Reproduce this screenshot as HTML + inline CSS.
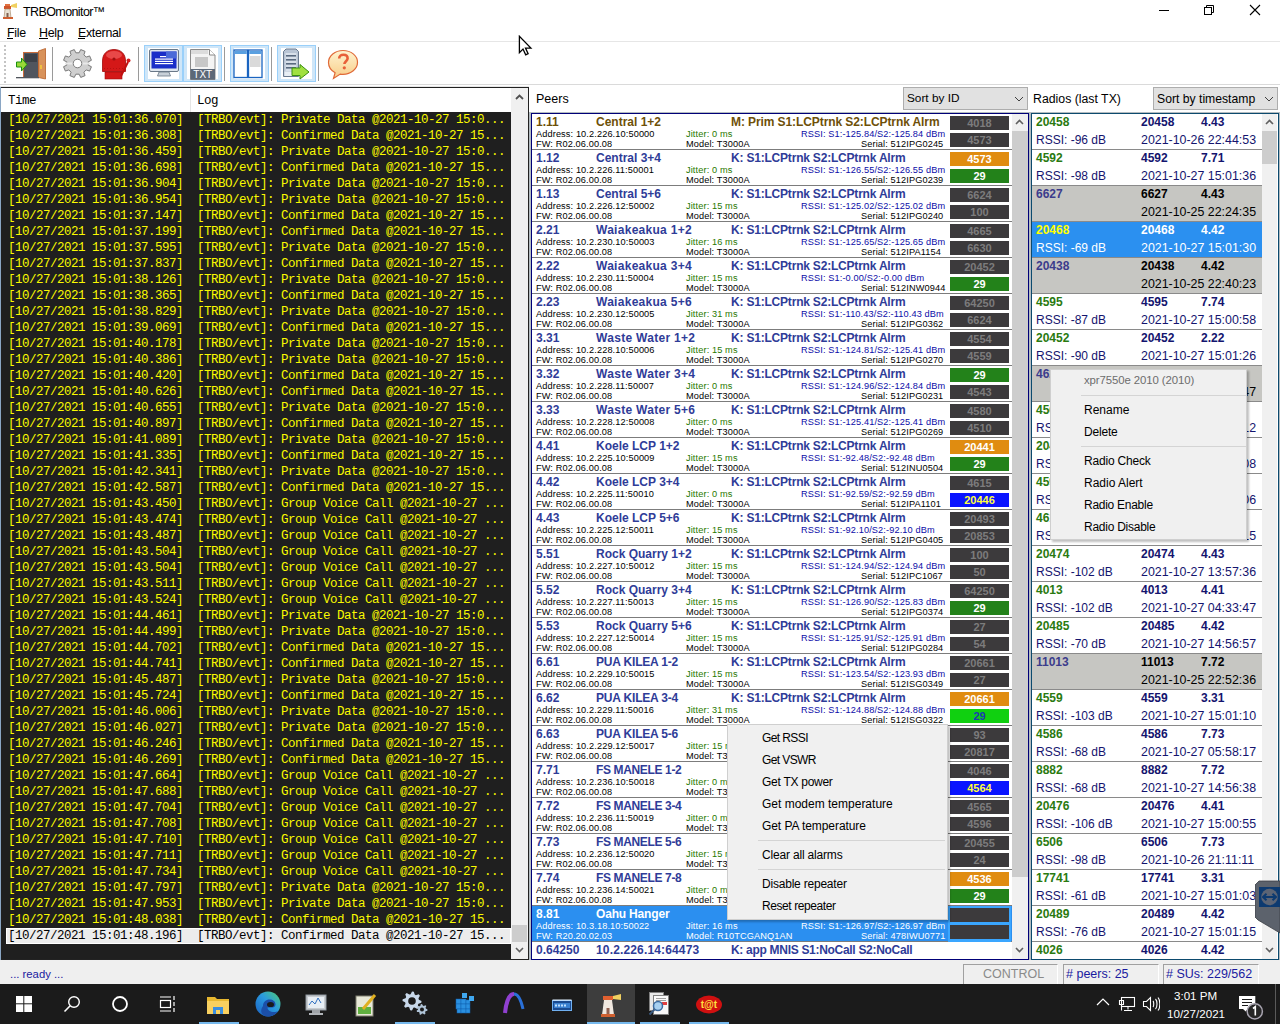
<!DOCTYPE html><html><head><meta charset="utf-8"><style>
*{margin:0;padding:0;box-sizing:border-box}
html,body{width:1280px;height:1024px;overflow:hidden;background:#fff;font-family:"Liberation Sans",sans-serif;position:relative}
.ab{position:absolute;white-space:nowrap}
.t{position:absolute;white-space:nowrap;line-height:1}
.lg{position:absolute;left:0;width:511px;height:16px;font-family:"Liberation Mono",monospace;font-size:12.5px;letter-spacing:-0.5px;color:#fafa00;line-height:16px;white-space:pre}
.lg span{position:absolute;top:0}
.pr{position:absolute;left:0;width:480px;height:36px;border-bottom:1px solid #7c7c7c}
.pr .t{font-weight:bold;font-size:12px}
.pr .s{position:absolute;white-space:nowrap;font-size:9.2px;line-height:1;color:#000;letter-spacing:0.12px}
.bd{position:absolute;left:418px;width:59px;height:14px;font-weight:bold;font-size:11px;line-height:14px;text-align:center;color:#7a7a7a;background:#3a3a3a}
.rr{position:absolute;left:0;width:230px;height:36px;border-bottom:1px solid #8a8a8a}
.rr .t{font-size:12px}
.mi{position:absolute;font-size:12px;line-height:1;white-space:nowrap;color:#000}
</style></head><body>

<div class="ab" style="left:0;top:0;width:1280px;height:42px;background:#fff"></div>
<svg class="ab" style="left:1px;top:2px" width="18" height="18" viewBox="0 0 18 18">
<rect x="3" y="4" width="7" height="3" fill="#d0542a"/><rect x="4" y="2" width="5" height="2" fill="#e07040"/>
<polygon points="10,3 16,1 16,6 10,5" fill="#f0d060"/>
<polygon points="4,7 9,7 10,16 3,16" fill="#e8e0d0" stroke="#a08060" stroke-width="0.6"/>
<rect x="2" y="15" width="10" height="2" fill="#d06030"/><rect x="5.5" y="11" width="2" height="4" fill="#806050"/>
</svg>
<div class="t" style="left:23px;top:5.8px;font-size:12.5px;letter-spacing:-0.6px;color:#000">TRBOmonitor™</div>
<div class="ab" style="left:1159px;top:10px;width:10px;height:1px;background:#000"></div>
<svg class="ab" style="left:1203px;top:4px" width="12" height="12" viewBox="0 0 12 12"><rect x="1.5" y="3.5" width="7" height="7" fill="none" stroke="#000" stroke-width="1"/><path d="M3.5 3.5V1.5H10.5V8.5H8.5" fill="none" stroke="#000" stroke-width="1"/></svg>
<svg class="ab" style="left:1249px;top:4px" width="12" height="12" viewBox="0 0 12 12"><path d="M1 1L11 11M11 1L1 11" stroke="#000" stroke-width="1.1"/></svg>
<div class="t" style="left:7px;top:27.2px;font-size:12.4px;letter-spacing:-0.3px;color:#000">File</div>
<div class="t" style="left:39px;top:27.2px;font-size:12.4px;letter-spacing:-0.3px;color:#000">Help</div>
<div class="t" style="left:78px;top:27.2px;font-size:12.4px;letter-spacing:-0.3px;color:#000">External</div>
<div class="ab" style="left:7px;top:38px;width:6px;height:1px;background:#000"></div>
<div class="ab" style="left:39px;top:38px;width:9px;height:1px;background:#000"></div>
<div class="ab" style="left:78px;top:38px;width:7px;height:1px;background:#000"></div>
<div class="ab" style="left:0;top:41px;width:1280px;height:1px;background:#e6e6e6"></div>
<div class="ab" style="left:0;top:42px;width:1280px;height:43px;background:#fff"></div>
<div class="ab" style="left:0;top:84px;width:1280px;height:1px;background:#dadada"></div>
<div class="ab" style="left:4px;top:45px;width:2px;height:2px;background:#c4c4c4"></div>
<div class="ab" style="left:4px;top:49px;width:2px;height:2px;background:#c4c4c4"></div>
<div class="ab" style="left:4px;top:53px;width:2px;height:2px;background:#c4c4c4"></div>
<div class="ab" style="left:4px;top:57px;width:2px;height:2px;background:#c4c4c4"></div>
<div class="ab" style="left:4px;top:61px;width:2px;height:2px;background:#c4c4c4"></div>
<div class="ab" style="left:4px;top:65px;width:2px;height:2px;background:#c4c4c4"></div>
<div class="ab" style="left:4px;top:69px;width:2px;height:2px;background:#c4c4c4"></div>
<div class="ab" style="left:4px;top:73px;width:2px;height:2px;background:#c4c4c4"></div>
<div class="ab" style="left:4px;top:77px;width:2px;height:2px;background:#c4c4c4"></div>
<div class="ab" style="left:4px;top:81px;width:2px;height:2px;background:#c4c4c4"></div>
<div class="ab" style="left:52px;top:47px;width:1px;height:34px;background:#9a9a9a"></div>
<div class="ab" style="left:138px;top:47px;width:1px;height:34px;background:#9a9a9a"></div>
<div class="ab" style="left:224px;top:47px;width:1px;height:34px;background:#9a9a9a"></div>
<div class="ab" style="left:271px;top:47px;width:1px;height:34px;background:#9a9a9a"></div>
<div class="ab" style="left:318px;top:47px;width:1px;height:34px;background:#9a9a9a"></div>
<div class="ab" style="left:144px;top:45px;width:39px;height:37px;background:#cfe6f8;border:1px solid #9ad0fa"></div>
<div class="ab" style="left:148px;top:48px;width:31px;height:31px;background:#fff"></div>
<div class="ab" style="left:183px;top:45px;width:39px;height:37px;background:#cfe6f8;border:1px solid #9ad0fa"></div>
<div class="ab" style="left:187px;top:48px;width:31px;height:31px;background:#fff"></div>
<div class="ab" style="left:230px;top:45px;width:39px;height:37px;background:#cfe6f8;border:1px solid #9ad0fa"></div>
<div class="ab" style="left:234px;top:48px;width:31px;height:31px;background:#fff"></div>
<div class="ab" style="left:277px;top:45px;width:39px;height:37px;background:#cfe6f8;border:1px solid #9ad0fa"></div>
<div class="ab" style="left:281px;top:48px;width:31px;height:31px;background:#fff"></div>
<svg class="ab" style="left:14px;top:47px" width="34" height="34" viewBox="0 0 34 34">
<rect x="9.5" y="5.5" width="15" height="25" fill="#50555e" stroke="#c86a3a" stroke-width="1"/>
<rect x="11" y="7" width="12" height="8" fill="#3c4048"/>
<polygon points="24.5,4 31.5,1.5 31.5,32 24.5,30.5" fill="#d8925a" stroke="#b8602a" stroke-width="0.8"/>
<rect x="26" y="18" width="2" height="4" fill="#f0c040"/>
<rect x="2" y="30" width="23" height="1.3" fill="#50555c"/>
<polygon points="2.5,15 7.5,15 7.5,11 13,17.5 7.5,24 7.5,20 2.5,20" fill="#98d838" stroke="#1a9010" stroke-width="1"/>
</svg>
<svg class="ab" style="left:62px;top:48px" width="31" height="31" viewBox="0 0 31 31">
<polygon points="26.18,17.11 29.43,18.73 27.63,23.07 24.19,21.92 21.92,24.19 23.07,27.63 18.73,29.43 17.11,26.18 13.89,26.18 12.27,29.43 7.93,27.63 9.08,24.19 6.81,21.92 3.37,23.07 1.57,18.73 4.82,17.11 4.82,13.89 1.57,12.27 3.37,7.93 6.81,9.08 9.08,6.81 7.93,3.37 12.27,1.57 13.89,4.82 17.11,4.82 18.73,1.57 23.07,3.37 21.92,6.81 24.19,9.08 27.63,7.93 29.43,12.27 26.18,13.89" fill="#cfcfcf" stroke="#7a7a7a" stroke-width="1"/>
<path d="M3 15.5h25" stroke="#e8e8e8" stroke-width="2"/>
<circle cx="15.5" cy="15.5" r="4.3" fill="#fff" stroke="#7a7a7a" stroke-width="1"/>
</svg>
<svg class="ab" style="left:100px;top:48px" width="32" height="32" viewBox="0 0 32 32">
<path d="M2.5 23.5V13C2.5 5.5 7.5 1.5 14 1.5S25.5 5.5 25.5 13V23.5z" fill="#d41818" stroke="#a00a0a" stroke-width="0.8"/>
<ellipse cx="14" cy="7" rx="8" ry="4" fill="#e84848"/>
<circle cx="14" cy="11" r="1.6" fill="#a01010"/>
<path d="M4 20.5h20" stroke="#b81010" stroke-width="1" stroke-dasharray="1 2"/>
<rect x="5" y="24" width="17" height="7" fill="#d41818" stroke="#a00a0a" stroke-width="0.6"/>
<path d="M21 28L28 14" stroke="#c01010" stroke-width="2"/><circle cx="28.5" cy="12.5" r="2" fill="#d42020"/>
</svg>
<svg class="ab" style="left:148px;top:48px" width="32" height="32" viewBox="0 0 32 32">
<rect x="1.5" y="1.5" width="29" height="22" rx="1.5" fill="#dfe6ee" stroke="#6a7888" stroke-width="1"/>
<rect x="3.5" y="3.5" width="25" height="17" fill="#1a2ec8"/>
<rect x="18" y="3.5" width="10.5" height="7" fill="#4a6ad8"/>
<g fill="#fff"><rect x="12" y="8" width="6" height="1.2"/><rect x="7" y="10.5" width="18" height="1.2"/><rect x="7" y="12.8" width="18" height="1.2"/><rect x="7" y="15" width="18" height="1.2"/></g>
<path d="M11 24h10l1.5 4h-13z" fill="#c8d0d8" stroke="#6a7888" stroke-width="0.8"/>
</svg>
<svg class="ab" style="left:189px;top:48px" width="28" height="32" viewBox="0 0 28 32">
<path d="M1.5 1.5h19l5.5 5.5v24.5h-24.5z" fill="#f4f4f4" stroke="#8a8a8a" stroke-width="1"/>
<path d="M20.5 1.5v5.5h5.5" fill="#fff" stroke="#8a8a8a" stroke-width="1"/>
<rect x="2" y="2" width="17" height="4" fill="#dcdcdc"/>
<g fill="#9a9a9a"><rect x="6" y="9.5" width="13" height="1"/><rect x="6" y="11.5" width="13" height="1"/><rect x="6" y="13.5" width="13" height="1"/><rect x="6" y="15.5" width="13" height="1"/><rect x="6" y="17.5" width="13" height="1"/></g>
<rect x="1.5" y="21" width="24.5" height="10.5" fill="#5c6878"/>
<text x="13.8" y="30" font-family="Liberation Sans" font-size="10" fill="#fff" text-anchor="middle">TXT</text>
</svg>
<svg class="ab" style="left:233px;top:49px" width="31" height="30" viewBox="0 0 31 30">
<rect x="1" y="1" width="13.5" height="27.5" fill="#fff" stroke="#1a64c0" stroke-width="1.3"/>
<rect x="15.5" y="1" width="13.5" height="27.5" fill="#fff" stroke="#1a64c0" stroke-width="1.3"/>
<rect x="1.8" y="2" width="12" height="3" fill="#5aa0e0"/><rect x="16.3" y="2" width="12" height="3" fill="#5aa0e0"/>
<rect x="17" y="7" width="10.5" height="11" fill="#dadada"/>
</svg>
<svg class="ab" style="left:281px;top:48px" width="30" height="32" viewBox="0 0 30 32">
<path d="M2.5 3.5L5 1h10l2.5 2.5V28.5h-15z" fill="#b8c4d4" stroke="#6a7a90" stroke-width="1"/>
<rect x="4.5" y="5" width="11" height="18" fill="#d8e0ea"/>
<g fill="#5a6a80"><rect x="5" y="7" width="10" height="1.6"/><rect x="5" y="11" width="10" height="1.6"/><rect x="5" y="15" width="10" height="1.6"/><rect x="5" y="19" width="10" height="1.6"/></g>
<rect x="3.5" y="23.5" width="13" height="4.5" fill="#e8eef4"/>
<polygon points="11,20 19,20 19,16.5 28,24 19,31 19,27.5 11,27.5" fill="#a0e040" stroke="#3a9010" stroke-width="1"/>
</svg>
<svg class="ab" style="left:327px;top:49px" width="32" height="31" viewBox="0 0 32 31">
<defs><linearGradient id="hg" x1="0" y1="0" x2="0" y2="1"><stop offset="0" stop-color="#fff4d0"/><stop offset="1" stop-color="#f8cc88"/></linearGradient></defs>
<path d="M16 1.5C8 1.5 1.5 6.8 1.5 13.5c0 4.3 2.6 8 6.6 10.2L6.5 29.5l6.8-4.4c.9.1 1.8.2 2.7.2 8 0 14.5-5.3 14.5-12S24 1.5 16 1.5z" fill="url(#hg)" stroke="#e06a38" stroke-width="1.2"/>
<path d="M12.2 9.5c0-2.2 1.8-3.7 4.2-3.7 2.5 0 4.2 1.5 4.2 3.6 0 2.6-3.2 3-3.2 5.6" fill="none" stroke="#e8603a" stroke-width="2.6"/>
<circle cx="17.3" cy="18.8" r="1.6" fill="#e8603a"/>
</svg>
<svg class="ab" style="left:518px;top:34.6px" width="15" height="21" viewBox="0 0 15 21"><path d="M1.4 1.3V17.6L5 14l2.7 5.8 2.4-1.1-2.6-5.6H12.9Z" fill="#fff" stroke="#000" stroke-width="1.3" stroke-linejoin="miter"/></svg>
<div class="ab" style="left:0;top:86px;width:530px;height:874px;background:#e8e8e8"></div>
<div class="ab" style="left:0;top:87px;width:529px;height:873px;border:1px solid #222;background:#1f1f1f"></div><div class="ab" style="left:0;top:87px;width:1px;height:873px;background:#8aa6c4"></div>
<div class="ab" style="left:1px;top:88px;width:510px;height:24px;background:#fff"></div>
<div class="ab" style="left:190px;top:88px;width:1px;height:24px;background:#e5e5e5"></div>
<div class="t" style="left:8px;top:94.8px;font-family:'Liberation Mono', monospace;font-size:12.5px;letter-spacing:-0.5px;color:#000">Time</div>
<div class="t" style="left:197px;top:94.8px;font-family:'Liberation Mono', monospace;font-size:12.5px;letter-spacing:-0.5px;color:#000">Log</div>
<div class="ab" style="left:1px;top:112px;width:510px;height:847px;overflow:hidden">
<div class="lg" style="top:0px;"><span style="left:7px">[10/27/2021 15:01:36.070]</span><span style="left:196px">[TRBO/evt]: Private Data @2021-10-27 15:0...</span></div>
<div class="lg" style="top:16px;"><span style="left:7px">[10/27/2021 15:01:36.308]</span><span style="left:196px">[TRBO/evt]: Confirmed Data @2021-10-27 15...</span></div>
<div class="lg" style="top:32px;"><span style="left:7px">[10/27/2021 15:01:36.459]</span><span style="left:196px">[TRBO/evt]: Private Data @2021-10-27 15:0...</span></div>
<div class="lg" style="top:48px;"><span style="left:7px">[10/27/2021 15:01:36.698]</span><span style="left:196px">[TRBO/evt]: Confirmed Data @2021-10-27 15...</span></div>
<div class="lg" style="top:64px;"><span style="left:7px">[10/27/2021 15:01:36.904]</span><span style="left:196px">[TRBO/evt]: Private Data @2021-10-27 15:0...</span></div>
<div class="lg" style="top:80px;"><span style="left:7px">[10/27/2021 15:01:36.954]</span><span style="left:196px">[TRBO/evt]: Private Data @2021-10-27 15:0...</span></div>
<div class="lg" style="top:96px;"><span style="left:7px">[10/27/2021 15:01:37.147]</span><span style="left:196px">[TRBO/evt]: Confirmed Data @2021-10-27 15...</span></div>
<div class="lg" style="top:112px;"><span style="left:7px">[10/27/2021 15:01:37.199]</span><span style="left:196px">[TRBO/evt]: Confirmed Data @2021-10-27 15...</span></div>
<div class="lg" style="top:128px;"><span style="left:7px">[10/27/2021 15:01:37.595]</span><span style="left:196px">[TRBO/evt]: Private Data @2021-10-27 15:0...</span></div>
<div class="lg" style="top:144px;"><span style="left:7px">[10/27/2021 15:01:37.837]</span><span style="left:196px">[TRBO/evt]: Confirmed Data @2021-10-27 15...</span></div>
<div class="lg" style="top:160px;"><span style="left:7px">[10/27/2021 15:01:38.126]</span><span style="left:196px">[TRBO/evt]: Private Data @2021-10-27 15:0...</span></div>
<div class="lg" style="top:176px;"><span style="left:7px">[10/27/2021 15:01:38.365]</span><span style="left:196px">[TRBO/evt]: Confirmed Data @2021-10-27 15...</span></div>
<div class="lg" style="top:192px;"><span style="left:7px">[10/27/2021 15:01:38.829]</span><span style="left:196px">[TRBO/evt]: Private Data @2021-10-27 15:0...</span></div>
<div class="lg" style="top:208px;"><span style="left:7px">[10/27/2021 15:01:39.069]</span><span style="left:196px">[TRBO/evt]: Confirmed Data @2021-10-27 15...</span></div>
<div class="lg" style="top:224px;"><span style="left:7px">[10/27/2021 15:01:40.178]</span><span style="left:196px">[TRBO/evt]: Private Data @2021-10-27 15:0...</span></div>
<div class="lg" style="top:240px;"><span style="left:7px">[10/27/2021 15:01:40.386]</span><span style="left:196px">[TRBO/evt]: Private Data @2021-10-27 15:0...</span></div>
<div class="lg" style="top:256px;"><span style="left:7px">[10/27/2021 15:01:40.420]</span><span style="left:196px">[TRBO/evt]: Confirmed Data @2021-10-27 15...</span></div>
<div class="lg" style="top:272px;"><span style="left:7px">[10/27/2021 15:01:40.626]</span><span style="left:196px">[TRBO/evt]: Confirmed Data @2021-10-27 15...</span></div>
<div class="lg" style="top:288px;"><span style="left:7px">[10/27/2021 15:01:40.655]</span><span style="left:196px">[TRBO/evt]: Private Data @2021-10-27 15:0...</span></div>
<div class="lg" style="top:304px;"><span style="left:7px">[10/27/2021 15:01:40.897]</span><span style="left:196px">[TRBO/evt]: Confirmed Data @2021-10-27 15...</span></div>
<div class="lg" style="top:320px;"><span style="left:7px">[10/27/2021 15:01:41.089]</span><span style="left:196px">[TRBO/evt]: Private Data @2021-10-27 15:0...</span></div>
<div class="lg" style="top:336px;"><span style="left:7px">[10/27/2021 15:01:41.335]</span><span style="left:196px">[TRBO/evt]: Confirmed Data @2021-10-27 15...</span></div>
<div class="lg" style="top:352px;"><span style="left:7px">[10/27/2021 15:01:42.341]</span><span style="left:196px">[TRBO/evt]: Private Data @2021-10-27 15:0...</span></div>
<div class="lg" style="top:368px;"><span style="left:7px">[10/27/2021 15:01:42.587]</span><span style="left:196px">[TRBO/evt]: Confirmed Data @2021-10-27 15...</span></div>
<div class="lg" style="top:384px;"><span style="left:7px">[10/27/2021 15:01:43.450]</span><span style="left:196px">[TRBO/evt]: Group Voice Call @2021-10-27 ...</span></div>
<div class="lg" style="top:400px;"><span style="left:7px">[10/27/2021 15:01:43.474]</span><span style="left:196px">[TRBO/evt]: Group Voice Call @2021-10-27 ...</span></div>
<div class="lg" style="top:416px;"><span style="left:7px">[10/27/2021 15:01:43.487]</span><span style="left:196px">[TRBO/evt]: Group Voice Call @2021-10-27 ...</span></div>
<div class="lg" style="top:432px;"><span style="left:7px">[10/27/2021 15:01:43.504]</span><span style="left:196px">[TRBO/evt]: Group Voice Call @2021-10-27 ...</span></div>
<div class="lg" style="top:448px;"><span style="left:7px">[10/27/2021 15:01:43.504]</span><span style="left:196px">[TRBO/evt]: Group Voice Call @2021-10-27 ...</span></div>
<div class="lg" style="top:464px;"><span style="left:7px">[10/27/2021 15:01:43.511]</span><span style="left:196px">[TRBO/evt]: Group Voice Call @2021-10-27 ...</span></div>
<div class="lg" style="top:480px;"><span style="left:7px">[10/27/2021 15:01:43.524]</span><span style="left:196px">[TRBO/evt]: Group Voice Call @2021-10-27 ...</span></div>
<div class="lg" style="top:496px;"><span style="left:7px">[10/27/2021 15:01:44.461]</span><span style="left:196px">[TRBO/evt]: Private Data @2021-10-27 15:0...</span></div>
<div class="lg" style="top:512px;"><span style="left:7px">[10/27/2021 15:01:44.499]</span><span style="left:196px">[TRBO/evt]: Private Data @2021-10-27 15:0...</span></div>
<div class="lg" style="top:528px;"><span style="left:7px">[10/27/2021 15:01:44.702]</span><span style="left:196px">[TRBO/evt]: Confirmed Data @2021-10-27 15...</span></div>
<div class="lg" style="top:544px;"><span style="left:7px">[10/27/2021 15:01:44.741]</span><span style="left:196px">[TRBO/evt]: Confirmed Data @2021-10-27 15...</span></div>
<div class="lg" style="top:560px;"><span style="left:7px">[10/27/2021 15:01:45.487]</span><span style="left:196px">[TRBO/evt]: Private Data @2021-10-27 15:0...</span></div>
<div class="lg" style="top:576px;"><span style="left:7px">[10/27/2021 15:01:45.724]</span><span style="left:196px">[TRBO/evt]: Confirmed Data @2021-10-27 15...</span></div>
<div class="lg" style="top:592px;"><span style="left:7px">[10/27/2021 15:01:46.006]</span><span style="left:196px">[TRBO/evt]: Private Data @2021-10-27 15:0...</span></div>
<div class="lg" style="top:608px;"><span style="left:7px">[10/27/2021 15:01:46.027]</span><span style="left:196px">[TRBO/evt]: Private Data @2021-10-27 15:0...</span></div>
<div class="lg" style="top:624px;"><span style="left:7px">[10/27/2021 15:01:46.246]</span><span style="left:196px">[TRBO/evt]: Confirmed Data @2021-10-27 15...</span></div>
<div class="lg" style="top:640px;"><span style="left:7px">[10/27/2021 15:01:46.269]</span><span style="left:196px">[TRBO/evt]: Confirmed Data @2021-10-27 15...</span></div>
<div class="lg" style="top:656px;"><span style="left:7px">[10/27/2021 15:01:47.664]</span><span style="left:196px">[TRBO/evt]: Group Voice Call @2021-10-27 ...</span></div>
<div class="lg" style="top:672px;"><span style="left:7px">[10/27/2021 15:01:47.688]</span><span style="left:196px">[TRBO/evt]: Group Voice Call @2021-10-27 ...</span></div>
<div class="lg" style="top:688px;"><span style="left:7px">[10/27/2021 15:01:47.704]</span><span style="left:196px">[TRBO/evt]: Group Voice Call @2021-10-27 ...</span></div>
<div class="lg" style="top:704px;"><span style="left:7px">[10/27/2021 15:01:47.708]</span><span style="left:196px">[TRBO/evt]: Group Voice Call @2021-10-27 ...</span></div>
<div class="lg" style="top:720px;"><span style="left:7px">[10/27/2021 15:01:47.710]</span><span style="left:196px">[TRBO/evt]: Group Voice Call @2021-10-27 ...</span></div>
<div class="lg" style="top:736px;"><span style="left:7px">[10/27/2021 15:01:47.711]</span><span style="left:196px">[TRBO/evt]: Group Voice Call @2021-10-27 ...</span></div>
<div class="lg" style="top:752px;"><span style="left:7px">[10/27/2021 15:01:47.734]</span><span style="left:196px">[TRBO/evt]: Group Voice Call @2021-10-27 ...</span></div>
<div class="lg" style="top:768px;"><span style="left:7px">[10/27/2021 15:01:47.797]</span><span style="left:196px">[TRBO/evt]: Private Data @2021-10-27 15:0...</span></div>
<div class="lg" style="top:784px;"><span style="left:7px">[10/27/2021 15:01:47.953]</span><span style="left:196px">[TRBO/evt]: Private Data @2021-10-27 15:0...</span></div>
<div class="lg" style="top:800px;"><span style="left:7px">[10/27/2021 15:01:48.038]</span><span style="left:196px">[TRBO/evt]: Confirmed Data @2021-10-27 15...</span></div>
<div class="ab" style="left:5px;top:816px;width:505px;height:16px;background:#ececec;border:1px solid #fff"></div>
<div class="lg" style="top:816px;color:#000;"><span style="left:7px">[10/27/2021 15:01:48.196]</span><span style="left:196px">[TRBO/evt]: Confirmed Data @2021-10-27 15...</span></div>
</div>
<div class="ab" style="left:511px;top:88px;width:17px;height:871px;background:#f0f0f0"></div>
<div class="ab" style="left:512px;top:925px;width:15px;height:17px;background:#cdcdcd"></div>
<svg class="ab" style="left:515px;top:94px" width="9" height="6" viewBox="0 0 9 6"><path d="M1 5L4.5 1.5 8 5" fill="none" stroke="#505050" stroke-width="1.8"/></svg>
<svg class="ab" style="left:515px;top:947px" width="9" height="6" viewBox="0 0 9 6"><path d="M1 1L4.5 4.5 8 1" fill="none" stroke="#606060" stroke-width="1.6"/></svg>
<div class="ab" style="left:529px;top:86px;width:2px;height:874px;background:#fff"></div><div class="ab" style="left:529px;top:112px;width:2px;height:848px;background:#b4bcc0"></div>
<div class="ab" style="left:531px;top:86px;width:498px;height:27px;background:#fff"></div>
<div class="t" style="left:536px;top:92.8px;font-size:12.5px;color:#000">Peers</div>
<div class="ab" style="left:903px;top:87px;width:125px;height:23px;background:#e1e1e1;border:1px solid #adadad"></div>
<div class="t" style="left:907px;top:92.6px;font-size:11.8px;color:#000">Sort by ID</div>
<svg class="ab" style="left:1014px;top:96px" width="10" height="6" viewBox="0 0 10 6"><path d="M1 1L5 5 9 1" fill="none" stroke="#404040" stroke-width="1"/></svg>
<div class="ab" style="left:531px;top:113px;width:498px;height:847px;border:1px solid #000078;background:#fff"></div>
<div class="ab" style="left:532px;top:114px;width:480px;height:845px;overflow:hidden">
<div class="pr" style="top:0px;">
<div class="t" style="left:4px;top:1.6px;color:#6e5008">1.11</div>
<div class="t" style="left:64px;top:1.6px;color:#6e5008;letter-spacing:0px">Central 1+2</div>
<div class="t" style="left:199px;top:1.6px;color:#6e5008;letter-spacing:-0.09px">M: Prim S1:LCPtrnk S2:LCPtrnk Alrm</div>
<div class="s" style="left:4px;top:15.8px;color:#000">Address: 10.2.226.10:50000</div>
<div class="s" style="left:4px;top:25.8px;color:#000">FW: R02.06.00.08</div>
<div class="s" style="left:154px;top:15.8px;color:#287800">Jitter: 0 ms</div>
<div class="s" style="left:154px;top:25.8px;color:#000">Model: T3000A</div>
<div class="s" style="left:269px;top:15.8px;color:#0c0ca8">RSSI: S1:-125.84/S2:-125.84 dBm</div>
<div class="s" style="left:329px;top:25.8px;color:#000">Serial: 512IPG0245</div>
<div class="bd" style="top:2px;background:#3c3a3c;color:#7c7c7c">4018</div>
<div class="bd" style="top:19px;background:#3c3a3c;color:#7c7c7c">4573</div>
</div>
<div class="pr" style="top:36px;">
<div class="t" style="left:4px;top:1.6px;color:#2f3c98">1.12</div>
<div class="t" style="left:64px;top:1.6px;color:#2f3c98;letter-spacing:0px">Central 3+4</div>
<div class="t" style="left:199px;top:1.6px;color:#2f3c98;letter-spacing:-0.2px">K: S1:LCPtrnk S2:LCPtrnk Alrm</div>
<div class="s" style="left:4px;top:15.8px;color:#000">Address: 10.2.226.11:50001</div>
<div class="s" style="left:4px;top:25.8px;color:#000">FW: R02.06.00.08</div>
<div class="s" style="left:154px;top:15.8px;color:#287800">Jitter: 0 ms</div>
<div class="s" style="left:154px;top:25.8px;color:#000">Model: T3000A</div>
<div class="s" style="left:269px;top:15.8px;color:#0c0ca8">RSSI: S1:-126.55/S2:-126.55 dBm</div>
<div class="s" style="left:329px;top:25.8px;color:#000">Serial: 512IPG0239</div>
<div class="bd" style="top:2px;background:#e08c10;color:#fff">4573</div>
<div class="bd" style="top:19px;background:#23821a;color:#fff">29</div>
</div>
<div class="pr" style="top:72px;">
<div class="t" style="left:4px;top:1.6px;color:#2f3c98">1.13</div>
<div class="t" style="left:64px;top:1.6px;color:#2f3c98;letter-spacing:0px">Central 5+6</div>
<div class="t" style="left:199px;top:1.6px;color:#2f3c98;letter-spacing:-0.2px">K: S1:LCPtrnk S2:LCPtrnk Alrm</div>
<div class="s" style="left:4px;top:15.8px;color:#000">Address: 10.2.226.12:50002</div>
<div class="s" style="left:4px;top:25.8px;color:#000">FW: R02.06.00.08</div>
<div class="s" style="left:154px;top:15.8px;color:#287800">Jitter: 15 ms</div>
<div class="s" style="left:154px;top:25.8px;color:#000">Model: T3000A</div>
<div class="s" style="left:269px;top:15.8px;color:#0c0ca8">RSSI: S1:-125.02/S2:-125.02 dBm</div>
<div class="s" style="left:329px;top:25.8px;color:#000">Serial: 512IPG0240</div>
<div class="bd" style="top:2px;background:#3c3a3c;color:#7c7c7c">6624</div>
<div class="bd" style="top:19px;background:#3c3a3c;color:#7c7c7c">100</div>
</div>
<div class="pr" style="top:108px;">
<div class="t" style="left:4px;top:1.6px;color:#2f3c98">2.21</div>
<div class="t" style="left:64px;top:1.6px;color:#2f3c98;letter-spacing:0.28px">Waiakeakua 1+2</div>
<div class="t" style="left:199px;top:1.6px;color:#2f3c98;letter-spacing:-0.2px">K: S1:LCPtrnk S2:LCPtrnk Alrm</div>
<div class="s" style="left:4px;top:15.8px;color:#000">Address: 10.2.230.10:50003</div>
<div class="s" style="left:4px;top:25.8px;color:#000">FW: R02.06.00.08</div>
<div class="s" style="left:154px;top:15.8px;color:#287800">Jitter: 16 ms</div>
<div class="s" style="left:154px;top:25.8px;color:#000">Model: T3000A</div>
<div class="s" style="left:269px;top:15.8px;color:#0c0ca8">RSSI: S1:-125.65/S2:-125.65 dBm</div>
<div class="s" style="left:329px;top:25.8px;color:#000">Serial: 512IPA1154</div>
<div class="bd" style="top:2px;background:#3c3a3c;color:#7c7c7c">4665</div>
<div class="bd" style="top:19px;background:#3c3a3c;color:#7c7c7c">6630</div>
</div>
<div class="pr" style="top:144px;">
<div class="t" style="left:4px;top:1.6px;color:#2f3c98">2.22</div>
<div class="t" style="left:64px;top:1.6px;color:#2f3c98;letter-spacing:0.28px">Waiakeakua 3+4</div>
<div class="t" style="left:199px;top:1.6px;color:#2f3c98;letter-spacing:-0.2px">K: S1:LCPtrnk S2:LCPtrnk Alrm</div>
<div class="s" style="left:4px;top:15.8px;color:#000">Address: 10.2.230.11:50004</div>
<div class="s" style="left:4px;top:25.8px;color:#000">FW: R02.06.00.08</div>
<div class="s" style="left:154px;top:15.8px;color:#287800">Jitter: 15 ms</div>
<div class="s" style="left:154px;top:25.8px;color:#000">Model: T3000A</div>
<div class="s" style="left:269px;top:15.8px;color:#0c0ca8">RSSI: S1:-0.00/S2:-0.00 dBm</div>
<div class="s" style="left:329px;top:25.8px;color:#000">Serial: 512INW0944</div>
<div class="bd" style="top:2px;background:#3c3a3c;color:#7c7c7c">20452</div>
<div class="bd" style="top:19px;background:#23821a;color:#fff">29</div>
</div>
<div class="pr" style="top:180px;">
<div class="t" style="left:4px;top:1.6px;color:#2f3c98">2.23</div>
<div class="t" style="left:64px;top:1.6px;color:#2f3c98;letter-spacing:0.28px">Waiakeakua 5+6</div>
<div class="t" style="left:199px;top:1.6px;color:#2f3c98;letter-spacing:-0.2px">K: S1:LCPtrnk S2:LCPtrnk Alrm</div>
<div class="s" style="left:4px;top:15.8px;color:#000">Address: 10.2.230.12:50005</div>
<div class="s" style="left:4px;top:25.8px;color:#000">FW: R02.06.00.08</div>
<div class="s" style="left:154px;top:15.8px;color:#287800">Jitter: 31 ms</div>
<div class="s" style="left:154px;top:25.8px;color:#000">Model: T3000A</div>
<div class="s" style="left:269px;top:15.8px;color:#0c0ca8">RSSI: S1:-110.43/S2:-110.43 dBm</div>
<div class="s" style="left:329px;top:25.8px;color:#000">Serial: 512IPG0362</div>
<div class="bd" style="top:2px;background:#3c3a3c;color:#7c7c7c">64250</div>
<div class="bd" style="top:19px;background:#3c3a3c;color:#7c7c7c">6624</div>
</div>
<div class="pr" style="top:216px;">
<div class="t" style="left:4px;top:1.6px;color:#2f3c98">3.31</div>
<div class="t" style="left:64px;top:1.6px;color:#2f3c98;letter-spacing:0.3px">Waste Water 1+2</div>
<div class="t" style="left:199px;top:1.6px;color:#2f3c98;letter-spacing:-0.2px">K: S1:LCPtrnk S2:LCPtrnk Alrm</div>
<div class="s" style="left:4px;top:15.8px;color:#000">Address: 10.2.228.10:50006</div>
<div class="s" style="left:4px;top:25.8px;color:#000">FW: R02.06.00.08</div>
<div class="s" style="left:154px;top:15.8px;color:#287800">Jitter: 15 ms</div>
<div class="s" style="left:154px;top:25.8px;color:#000">Model: T3000A</div>
<div class="s" style="left:269px;top:15.8px;color:#0c0ca8">RSSI: S1:-124.81/S2:-125.41 dBm</div>
<div class="s" style="left:329px;top:25.8px;color:#000">Serial: 512IPG0270</div>
<div class="bd" style="top:2px;background:#3c3a3c;color:#7c7c7c">4554</div>
<div class="bd" style="top:19px;background:#3c3a3c;color:#7c7c7c">4559</div>
</div>
<div class="pr" style="top:252px;">
<div class="t" style="left:4px;top:1.6px;color:#2f3c98">3.32</div>
<div class="t" style="left:64px;top:1.6px;color:#2f3c98;letter-spacing:0.3px">Waste Water 3+4</div>
<div class="t" style="left:199px;top:1.6px;color:#2f3c98;letter-spacing:-0.2px">K: S1:LCPtrnk S2:LCPtrnk Alrm</div>
<div class="s" style="left:4px;top:15.8px;color:#000">Address: 10.2.228.11:50007</div>
<div class="s" style="left:4px;top:25.8px;color:#000">FW: R02.06.00.08</div>
<div class="s" style="left:154px;top:15.8px;color:#287800">Jitter: 0 ms</div>
<div class="s" style="left:154px;top:25.8px;color:#000">Model: T3000A</div>
<div class="s" style="left:269px;top:15.8px;color:#0c0ca8">RSSI: S1:-124.96/S2:-124.84 dBm</div>
<div class="s" style="left:329px;top:25.8px;color:#000">Serial: 512IPG0231</div>
<div class="bd" style="top:2px;background:#23821a;color:#fff">29</div>
<div class="bd" style="top:19px;background:#3c3a3c;color:#7c7c7c">4543</div>
</div>
<div class="pr" style="top:288px;">
<div class="t" style="left:4px;top:1.6px;color:#2f3c98">3.33</div>
<div class="t" style="left:64px;top:1.6px;color:#2f3c98;letter-spacing:0.3px">Waste Water 5+6</div>
<div class="t" style="left:199px;top:1.6px;color:#2f3c98;letter-spacing:-0.2px">K: S1:LCPtrnk S2:LCPtrnk Alrm</div>
<div class="s" style="left:4px;top:15.8px;color:#000">Address: 10.2.228.12:50008</div>
<div class="s" style="left:4px;top:25.8px;color:#000">FW: R02.06.00.08</div>
<div class="s" style="left:154px;top:15.8px;color:#287800">Jitter: 0 ms</div>
<div class="s" style="left:154px;top:25.8px;color:#000">Model: T3000A</div>
<div class="s" style="left:269px;top:15.8px;color:#0c0ca8">RSSI: S1:-125.41/S2:-125.41 dBm</div>
<div class="s" style="left:329px;top:25.8px;color:#000">Serial: 512IPG0269</div>
<div class="bd" style="top:2px;background:#3c3a3c;color:#7c7c7c">4580</div>
<div class="bd" style="top:19px;background:#3c3a3c;color:#7c7c7c">4510</div>
</div>
<div class="pr" style="top:324px;">
<div class="t" style="left:4px;top:1.6px;color:#2f3c98">4.41</div>
<div class="t" style="left:64px;top:1.6px;color:#2f3c98;letter-spacing:0px">Koele LCP 1+2</div>
<div class="t" style="left:199px;top:1.6px;color:#2f3c98;letter-spacing:-0.2px">K: S1:LCPtrnk S2:LCPtrnk Alrm</div>
<div class="s" style="left:4px;top:15.8px;color:#000">Address: 10.2.225.10:50009</div>
<div class="s" style="left:4px;top:25.8px;color:#000">FW: R02.06.00.08</div>
<div class="s" style="left:154px;top:15.8px;color:#287800">Jitter: 15 ms</div>
<div class="s" style="left:154px;top:25.8px;color:#000">Model: T3000A</div>
<div class="s" style="left:269px;top:15.8px;color:#0c0ca8">RSSI: S1:-92.48/S2:-92.48 dBm</div>
<div class="s" style="left:329px;top:25.8px;color:#000">Serial: 512INU0504</div>
<div class="bd" style="top:2px;background:#e08c10;color:#fff">20441</div>
<div class="bd" style="top:19px;background:#23821a;color:#fff">29</div>
</div>
<div class="pr" style="top:360px;">
<div class="t" style="left:4px;top:1.6px;color:#2f3c98">4.42</div>
<div class="t" style="left:64px;top:1.6px;color:#2f3c98;letter-spacing:0px">Koele LCP 3+4</div>
<div class="t" style="left:199px;top:1.6px;color:#2f3c98;letter-spacing:-0.2px">K: S1:LCPtrnk S2:LCPtrnk Alrm</div>
<div class="s" style="left:4px;top:15.8px;color:#000">Address: 10.2.225.11:50010</div>
<div class="s" style="left:4px;top:25.8px;color:#000">FW: R02.06.00.08</div>
<div class="s" style="left:154px;top:15.8px;color:#287800">Jitter: 0 ms</div>
<div class="s" style="left:154px;top:25.8px;color:#000">Model: T3000A</div>
<div class="s" style="left:269px;top:15.8px;color:#0c0ca8">RSSI: S1:-92.59/S2:-92.59 dBm</div>
<div class="s" style="left:329px;top:25.8px;color:#000">Serial: 512IPA1101</div>
<div class="bd" style="top:2px;background:#3c3a3c;color:#7c7c7c">4615</div>
<div class="bd" style="top:19px;background:#0a14ff;color:#ffff40">20446</div>
</div>
<div class="pr" style="top:396px;">
<div class="t" style="left:4px;top:1.6px;color:#2f3c98">4.43</div>
<div class="t" style="left:64px;top:1.6px;color:#2f3c98;letter-spacing:0px">Koele LCP 5+6</div>
<div class="t" style="left:199px;top:1.6px;color:#2f3c98;letter-spacing:-0.2px">K: S1:LCPtrnk S2:LCPtrnk Alrm</div>
<div class="s" style="left:4px;top:15.8px;color:#000">Address: 10.2.225.12:50011</div>
<div class="s" style="left:4px;top:25.8px;color:#000">FW: R02.06.00.08</div>
<div class="s" style="left:154px;top:15.8px;color:#287800">Jitter: 15 ms</div>
<div class="s" style="left:154px;top:25.8px;color:#000">Model: T3000A</div>
<div class="s" style="left:269px;top:15.8px;color:#0c0ca8">RSSI: S1:-92.10/S2:-92.10 dBm</div>
<div class="s" style="left:329px;top:25.8px;color:#000">Serial: 512IPG0405</div>
<div class="bd" style="top:2px;background:#3c3a3c;color:#7c7c7c">20493</div>
<div class="bd" style="top:19px;background:#3c3a3c;color:#7c7c7c">20853</div>
</div>
<div class="pr" style="top:432px;">
<div class="t" style="left:4px;top:1.6px;color:#2f3c98">5.51</div>
<div class="t" style="left:64px;top:1.6px;color:#2f3c98;letter-spacing:0px">Rock Quarry 1+2</div>
<div class="t" style="left:199px;top:1.6px;color:#2f3c98;letter-spacing:-0.2px">K: S1:LCPtrnk S2:LCPtrnk Alrm</div>
<div class="s" style="left:4px;top:15.8px;color:#000">Address: 10.2.227.10:50012</div>
<div class="s" style="left:4px;top:25.8px;color:#000">FW: R02.06.00.08</div>
<div class="s" style="left:154px;top:15.8px;color:#287800">Jitter: 15 ms</div>
<div class="s" style="left:154px;top:25.8px;color:#000">Model: T3000A</div>
<div class="s" style="left:269px;top:15.8px;color:#0c0ca8">RSSI: S1:-124.94/S2:-124.94 dBm</div>
<div class="s" style="left:329px;top:25.8px;color:#000">Serial: 512IPC1067</div>
<div class="bd" style="top:2px;background:#3c3a3c;color:#7c7c7c">100</div>
<div class="bd" style="top:19px;background:#3c3a3c;color:#7c7c7c">50</div>
</div>
<div class="pr" style="top:468px;">
<div class="t" style="left:4px;top:1.6px;color:#2f3c98">5.52</div>
<div class="t" style="left:64px;top:1.6px;color:#2f3c98;letter-spacing:0px">Rock Quarry 3+4</div>
<div class="t" style="left:199px;top:1.6px;color:#2f3c98;letter-spacing:-0.2px">K: S1:LCPtrnk S2:LCPtrnk Alrm</div>
<div class="s" style="left:4px;top:15.8px;color:#000">Address: 10.2.227.11:50013</div>
<div class="s" style="left:4px;top:25.8px;color:#000">FW: R02.06.00.08</div>
<div class="s" style="left:154px;top:15.8px;color:#287800">Jitter: 15 ms</div>
<div class="s" style="left:154px;top:25.8px;color:#000">Model: T3000A</div>
<div class="s" style="left:269px;top:15.8px;color:#0c0ca8">RSSI: S1:-126.90/S2:-125.83 dBm</div>
<div class="s" style="left:329px;top:25.8px;color:#000">Serial: 512IPG0374</div>
<div class="bd" style="top:2px;background:#3c3a3c;color:#7c7c7c">64250</div>
<div class="bd" style="top:19px;background:#23821a;color:#fff">29</div>
</div>
<div class="pr" style="top:504px;">
<div class="t" style="left:4px;top:1.6px;color:#2f3c98">5.53</div>
<div class="t" style="left:64px;top:1.6px;color:#2f3c98;letter-spacing:0px">Rock Quarry 5+6</div>
<div class="t" style="left:199px;top:1.6px;color:#2f3c98;letter-spacing:-0.2px">K: S1:LCPtrnk S2:LCPtrnk Alrm</div>
<div class="s" style="left:4px;top:15.8px;color:#000">Address: 10.2.227.12:50014</div>
<div class="s" style="left:4px;top:25.8px;color:#000">FW: R02.06.00.08</div>
<div class="s" style="left:154px;top:15.8px;color:#287800">Jitter: 15 ms</div>
<div class="s" style="left:154px;top:25.8px;color:#000">Model: T3000A</div>
<div class="s" style="left:269px;top:15.8px;color:#0c0ca8">RSSI: S1:-125.91/S2:-125.91 dBm</div>
<div class="s" style="left:329px;top:25.8px;color:#000">Serial: 512IPG0284</div>
<div class="bd" style="top:2px;background:#3c3a3c;color:#7c7c7c">27</div>
<div class="bd" style="top:19px;background:#3c3a3c;color:#7c7c7c">54</div>
</div>
<div class="pr" style="top:540px;">
<div class="t" style="left:4px;top:1.6px;color:#2f3c98">6.61</div>
<div class="t" style="left:64px;top:1.6px;color:#2f3c98;letter-spacing:-0.18px">PUA KILEA 1-2</div>
<div class="t" style="left:199px;top:1.6px;color:#2f3c98;letter-spacing:-0.2px">K: S1:LCPtrnk S2:LCPtrnk Alrm</div>
<div class="s" style="left:4px;top:15.8px;color:#000">Address: 10.2.229.10:50015</div>
<div class="s" style="left:4px;top:25.8px;color:#000">FW: R02.06.00.08</div>
<div class="s" style="left:154px;top:15.8px;color:#287800">Jitter: 15 ms</div>
<div class="s" style="left:154px;top:25.8px;color:#000">Model: T3000A</div>
<div class="s" style="left:269px;top:15.8px;color:#0c0ca8">RSSI: S1:-123.54/S2:-123.93 dBm</div>
<div class="s" style="left:329px;top:25.8px;color:#000">Serial: 512ISG0349</div>
<div class="bd" style="top:2px;background:#3c3a3c;color:#7c7c7c">20661</div>
<div class="bd" style="top:19px;background:#3c3a3c;color:#7c7c7c">27</div>
</div>
<div class="pr" style="top:576px;">
<div class="t" style="left:4px;top:1.6px;color:#2f3c98">6.62</div>
<div class="t" style="left:64px;top:1.6px;color:#2f3c98;letter-spacing:-0.18px">PUA KILEA 3-4</div>
<div class="t" style="left:199px;top:1.6px;color:#2f3c98;letter-spacing:-0.2px">K: S1:LCPtrnk S2:LCPtrnk Alrm</div>
<div class="s" style="left:4px;top:15.8px;color:#000">Address: 10.2.229.11:50016</div>
<div class="s" style="left:4px;top:25.8px;color:#000">FW: R02.06.00.08</div>
<div class="s" style="left:154px;top:15.8px;color:#287800">Jitter: 31 ms</div>
<div class="s" style="left:154px;top:25.8px;color:#000">Model: T3000A</div>
<div class="s" style="left:269px;top:15.8px;color:#0c0ca8">RSSI: S1:-124.88/S2:-124.88 dBm</div>
<div class="s" style="left:329px;top:25.8px;color:#000">Serial: 512ISG0322</div>
<div class="bd" style="top:2px;background:#e08c10;color:#fff">20661</div>
<div class="bd" style="top:19px;background:#10d010;color:#1a3ab0">29</div>
</div>
<div class="pr" style="top:612px;">
<div class="t" style="left:4px;top:1.6px;color:#2f3c98">6.63</div>
<div class="t" style="left:64px;top:1.6px;color:#2f3c98;letter-spacing:-0.18px">PUA KILEA 5-6</div>
<div class="t" style="left:199px;top:1.6px;color:#2f3c98;letter-spacing:-0.2px">K: S1:LCPtrnk S2:LCPtrnk Alrm</div>
<div class="s" style="left:4px;top:15.8px;color:#000">Address: 10.2.229.12:50017</div>
<div class="s" style="left:4px;top:25.8px;color:#000">FW: R02.06.00.08</div>
<div class="s" style="left:154px;top:15.8px;color:#287800">Jitter: 15 ms</div>
<div class="s" style="left:154px;top:25.8px;color:#000">Model: T3000A</div>
<div class="s" style="left:269px;top:15.8px;color:#0c0ca8">RSSI: S1:-125.00/S2:-125.00 dBm</div>
<div class="s" style="left:329px;top:25.8px;color:#000">Serial: 512ISG0300</div>
<div class="bd" style="top:2px;background:#3c3a3c;color:#7c7c7c">93</div>
<div class="bd" style="top:19px;background:#3c3a3c;color:#7c7c7c">20817</div>
</div>
<div class="pr" style="top:648px;">
<div class="t" style="left:4px;top:1.6px;color:#2f3c98">7.71</div>
<div class="t" style="left:64px;top:1.6px;color:#2f3c98;letter-spacing:-0.36px">FS MANELE 1-2</div>
<div class="t" style="left:199px;top:1.6px;color:#2f3c98;letter-spacing:-0.2px">K: S1:LCPtrnk S2:LCPtrnk Alrm</div>
<div class="s" style="left:4px;top:15.8px;color:#000">Address: 10.2.236.10:50018</div>
<div class="s" style="left:4px;top:25.8px;color:#000">FW: R02.06.00.08</div>
<div class="s" style="left:154px;top:15.8px;color:#287800">Jitter: 0 ms</div>
<div class="s" style="left:154px;top:25.8px;color:#000">Model: T3000A</div>
<div class="s" style="left:269px;top:15.8px;color:#0c0ca8">RSSI: S1:-125.00/S2:-125.00 dBm</div>
<div class="s" style="left:329px;top:25.8px;color:#000">Serial: 512IPG0300</div>
<div class="bd" style="top:2px;background:#3c3a3c;color:#7c7c7c">4046</div>
<div class="bd" style="top:19px;background:#0a14ff;color:#ffff40">4564</div>
</div>
<div class="pr" style="top:684px;">
<div class="t" style="left:4px;top:1.6px;color:#2f3c98">7.72</div>
<div class="t" style="left:64px;top:1.6px;color:#2f3c98;letter-spacing:-0.36px">FS MANELE 3-4</div>
<div class="t" style="left:199px;top:1.6px;color:#2f3c98;letter-spacing:-0.2px">K: S1:LCPtrnk S2:LCPtrnk Alrm</div>
<div class="s" style="left:4px;top:15.8px;color:#000">Address: 10.2.236.11:50019</div>
<div class="s" style="left:4px;top:25.8px;color:#000">FW: R02.06.00.08</div>
<div class="s" style="left:154px;top:15.8px;color:#287800">Jitter: 0 ms</div>
<div class="s" style="left:154px;top:25.8px;color:#000">Model: T3000A</div>
<div class="s" style="left:269px;top:15.8px;color:#0c0ca8">RSSI: S1:-125.00/S2:-125.00 dBm</div>
<div class="s" style="left:329px;top:25.8px;color:#000">Serial: 512IPG0300</div>
<div class="bd" style="top:2px;background:#3c3a3c;color:#7c7c7c">4565</div>
<div class="bd" style="top:19px;background:#3c3a3c;color:#7c7c7c">4596</div>
</div>
<div class="pr" style="top:720px;">
<div class="t" style="left:4px;top:1.6px;color:#2f3c98">7.73</div>
<div class="t" style="left:64px;top:1.6px;color:#2f3c98;letter-spacing:-0.36px">FS MANELE 5-6</div>
<div class="t" style="left:199px;top:1.6px;color:#2f3c98;letter-spacing:-0.2px">K: S1:LCPtrnk S2:LCPtrnk Alrm</div>
<div class="s" style="left:4px;top:15.8px;color:#000">Address: 10.2.236.12:50020</div>
<div class="s" style="left:4px;top:25.8px;color:#000">FW: R02.06.00.08</div>
<div class="s" style="left:154px;top:15.8px;color:#287800">Jitter: 15 ms</div>
<div class="s" style="left:154px;top:25.8px;color:#000">Model: T3000A</div>
<div class="s" style="left:269px;top:15.8px;color:#0c0ca8">RSSI: S1:-125.00/S2:-125.00 dBm</div>
<div class="s" style="left:329px;top:25.8px;color:#000">Serial: 512IPG0300</div>
<div class="bd" style="top:2px;background:#3c3a3c;color:#7c7c7c">20455</div>
<div class="bd" style="top:19px;background:#3c3a3c;color:#7c7c7c">24</div>
</div>
<div class="pr" style="top:756px;">
<div class="t" style="left:4px;top:1.6px;color:#2f3c98">7.74</div>
<div class="t" style="left:64px;top:1.6px;color:#2f3c98;letter-spacing:-0.36px">FS MANELE 7-8</div>
<div class="t" style="left:199px;top:1.6px;color:#2f3c98;letter-spacing:-0.2px">K: S1:LCPtrnk S2:LCPtrnk Alrm</div>
<div class="s" style="left:4px;top:15.8px;color:#000">Address: 10.2.236.14:50021</div>
<div class="s" style="left:4px;top:25.8px;color:#000">FW: R02.06.00.08</div>
<div class="s" style="left:154px;top:15.8px;color:#287800">Jitter: 0 ms</div>
<div class="s" style="left:154px;top:25.8px;color:#000">Model: T3000A</div>
<div class="s" style="left:269px;top:15.8px;color:#0c0ca8">RSSI: S1:-125.00/S2:-125.00 dBm</div>
<div class="s" style="left:329px;top:25.8px;color:#000">Serial: 512IPG0300</div>
<div class="bd" style="top:2px;background:#e08c10;color:#fff">4536</div>
<div class="bd" style="top:19px;background:#23821a;color:#fff">29</div>
</div>
<div class="pr" style="top:792px;background:#2b8ff0;">
<div class="t" style="left:4px;top:1.6px;color:#fff">8.81</div>
<div class="t" style="left:64px;top:1.6px;color:#fff;letter-spacing:-0.18px">Oahu Hanger</div>
<div class="s" style="left:4px;top:15.8px;color:#fff">Address: 10.3.18.10:50022</div>
<div class="s" style="left:4px;top:25.8px;color:#fff">FW: R20.20.02.03</div>
<div class="s" style="left:154px;top:15.8px;color:#fff">Jitter: 16 ms</div>
<div class="s" style="left:154px;top:25.8px;color:#fff">Model: R10TCGANQ1AN</div>
<div class="s" style="left:269px;top:15.8px;color:#fff">RSSI: S1:-126.97/S2:-126.97 dBm</div>
<div class="s" style="left:329px;top:25.8px;color:#fff">Serial: 478IWU0771</div>
<div class="ab" style="left:416px;top:0;width:63px;height:36px;background:#3aa6ff"></div>
<div class="bd" style="top:2px;background:#3c3a3c;color:#7c7c7c"></div>
<div class="bd" style="top:19px;background:#3c3a3c;color:#7c7c7c"></div>
</div>
<div class="pr" style="top:828px;">
<div class="t" style="left:4px;top:1.6px;color:#2f3c98">0.64250</div>
<div class="t" style="left:64px;top:1.6px;color:#2f3c98;letter-spacing:0.15px">10.2.226.14:64473</div>
<div class="t" style="left:199px;top:1.6px;color:#2f3c98;letter-spacing:-0.3px">K: app MNIS S1:NoCall S2:NoCall</div>
</div>
</div>
<div class="ab" style="left:1012px;top:114px;width:16px;height:845px;background:#f0f0f0"></div>
<div class="ab" style="left:1012px;top:131px;width:16px;height:746px;background:#cdcdcd"></div>
<svg class="ab" style="left:1015px;top:119px" width="9" height="6" viewBox="0 0 9 6"><path d="M1 5L4.5 1.5 8 5" fill="none" stroke="#606060" stroke-width="1.6"/></svg>
<svg class="ab" style="left:1015px;top:947px" width="9" height="6" viewBox="0 0 9 6"><path d="M1 1L4.5 4.5 8 1" fill="none" stroke="#606060" stroke-width="1.6"/></svg>
<div class="ab" style="left:1029px;top:112px;width:2px;height:848px;background:#b4bcc0"></div>
<div class="ab" style="left:1031px;top:86px;width:249px;height:27px;background:#fff"></div>
<div class="t" style="left:1033px;top:92.6px;font-size:12.3px;color:#000">Radios (last TX)</div>
<div class="ab" style="left:1153px;top:87px;width:125px;height:23px;background:#e1e1e1;border:1px solid #adadad"></div>
<div class="t" style="left:1157px;top:92.6px;font-size:12.2px;color:#000">Sort by timestamp</div>
<svg class="ab" style="left:1264px;top:96px" width="10" height="6" viewBox="0 0 10 6"><path d="M1 1L5 5 9 1" fill="none" stroke="#404040" stroke-width="1"/></svg>
<div class="ab" style="left:1031px;top:113px;width:248px;height:847px;border:1px solid #0c4a6e;background:#fff"></div><div class="ab" style="left:1279px;top:112px;width:1px;height:848px;background:#b4bcc0"></div>
<div class="ab" style="left:1032px;top:114px;width:230px;height:844px;overflow:hidden">
<div class="rr" style="top:0px;">
<div class="t" style="left:4px;top:2px;font-weight:bold;color:#2a7a10">20458</div>
<div class="t" style="left:109px;top:2px;font-weight:bold;color:#14146e">20458</div>
<div class="t" style="left:169px;top:2px;font-weight:bold;color:#14146e">4.43</div>
<div class="t" style="left:4px;top:20.4px;color:#14146e">RSSI: -96 dB</div>
<div class="t" style="left:109px;top:20.2px;font-size:12.4px;color:#14146e">2021-10-26 22:44:53</div>
</div>
<div class="rr" style="top:36px;">
<div class="t" style="left:4px;top:2px;font-weight:bold;color:#2a7a10">4592</div>
<div class="t" style="left:109px;top:2px;font-weight:bold;color:#14146e">4592</div>
<div class="t" style="left:169px;top:2px;font-weight:bold;color:#14146e">7.71</div>
<div class="t" style="left:4px;top:20.4px;color:#14146e">RSSI: -98 dB</div>
<div class="t" style="left:109px;top:20.2px;font-size:12.4px;color:#14146e">2021-10-27 15:01:36</div>
</div>
<div class="rr" style="top:72px;background:#c6c6c2;">
<div class="t" style="left:4px;top:2px;font-weight:bold;color:#3c3c8c">6627</div>
<div class="t" style="left:109px;top:2px;font-weight:bold;color:#000">6627</div>
<div class="t" style="left:169px;top:2px;font-weight:bold;color:#000">4.43</div>
<div class="t" style="left:109px;top:20.2px;font-size:12.4px;color:#000">2021-10-25 22:24:35</div>
</div>
<div class="rr" style="top:108px;background:#2b90f0;">
<div class="t" style="left:4px;top:2px;font-weight:bold;color:#ffff00">20468</div>
<div class="t" style="left:109px;top:2px;font-weight:bold;color:#fff">20468</div>
<div class="t" style="left:169px;top:2px;font-weight:bold;color:#fff">4.42</div>
<div class="t" style="left:4px;top:20.4px;color:#fff">RSSI: -69 dB</div>
<div class="t" style="left:109px;top:20.2px;font-size:12.4px;color:#fff">2021-10-27 15:01:30</div>
</div>
<div class="rr" style="top:144px;background:#c6c6c2;">
<div class="t" style="left:4px;top:2px;font-weight:bold;color:#3c3c8c">20438</div>
<div class="t" style="left:109px;top:2px;font-weight:bold;color:#000">20438</div>
<div class="t" style="left:169px;top:2px;font-weight:bold;color:#000">4.42</div>
<div class="t" style="left:109px;top:20.2px;font-size:12.4px;color:#000">2021-10-25 22:40:23</div>
</div>
<div class="rr" style="top:180px;">
<div class="t" style="left:4px;top:2px;font-weight:bold;color:#2a7a10">4595</div>
<div class="t" style="left:109px;top:2px;font-weight:bold;color:#14146e">4595</div>
<div class="t" style="left:169px;top:2px;font-weight:bold;color:#14146e">7.74</div>
<div class="t" style="left:4px;top:20.4px;color:#14146e">RSSI: -87 dB</div>
<div class="t" style="left:109px;top:20.2px;font-size:12.4px;color:#14146e">2021-10-27 15:00:58</div>
</div>
<div class="rr" style="top:216px;">
<div class="t" style="left:4px;top:2px;font-weight:bold;color:#2a7a10">20452</div>
<div class="t" style="left:109px;top:2px;font-weight:bold;color:#14146e">20452</div>
<div class="t" style="left:169px;top:2px;font-weight:bold;color:#14146e">2.22</div>
<div class="t" style="left:4px;top:20.4px;color:#14146e">RSSI: -90 dB</div>
<div class="t" style="left:109px;top:20.2px;font-size:12.4px;color:#14146e">2021-10-27 15:01:26</div>
</div>
<div class="rr" style="top:252px;background:#c6c6c2;">
<div class="t" style="left:4px;top:2px;font-weight:bold;color:#3c3c8c">4627</div>
<div class="t" style="left:109px;top:2px;font-weight:bold;color:#000">4627</div>
<div class="t" style="left:169px;top:2px;font-weight:bold;color:#000">4.42</div>
<div class="t" style="left:109px;top:20.2px;font-size:12.4px;color:#000">2021-10-25 22:30:47</div>
</div>
<div class="rr" style="top:288px;">
<div class="t" style="left:4px;top:2px;font-weight:bold;color:#2a7a10">4561</div>
<div class="t" style="left:109px;top:2px;font-weight:bold;color:#14146e">4561</div>
<div class="t" style="left:169px;top:2px;font-weight:bold;color:#14146e">4.42</div>
<div class="t" style="left:4px;top:20.4px;color:#14146e">RSSI: -80 dB</div>
<div class="t" style="left:109px;top:20.2px;font-size:12.4px;color:#14146e">2021-10-27 15:01:12</div>
</div>
<div class="rr" style="top:324px;">
<div class="t" style="left:4px;top:2px;font-weight:bold;color:#2a7a10">20471</div>
<div class="t" style="left:109px;top:2px;font-weight:bold;color:#14146e">20471</div>
<div class="t" style="left:169px;top:2px;font-weight:bold;color:#14146e">4.43</div>
<div class="t" style="left:4px;top:20.4px;color:#14146e">RSSI: -95 dB</div>
<div class="t" style="left:109px;top:20.2px;font-size:12.4px;color:#14146e">2021-10-27 15:00:08</div>
</div>
<div class="rr" style="top:360px;">
<div class="t" style="left:4px;top:2px;font-weight:bold;color:#2a7a10">4590</div>
<div class="t" style="left:109px;top:2px;font-weight:bold;color:#14146e">4590</div>
<div class="t" style="left:169px;top:2px;font-weight:bold;color:#14146e">7.72</div>
<div class="t" style="left:4px;top:20.4px;color:#14146e">RSSI: -99 dB</div>
<div class="t" style="left:109px;top:20.2px;font-size:12.4px;color:#14146e">2021-10-27 15:00:06</div>
</div>
<div class="rr" style="top:396px;">
<div class="t" style="left:4px;top:2px;font-weight:bold;color:#2a7a10">4611</div>
<div class="t" style="left:109px;top:2px;font-weight:bold;color:#14146e">4611</div>
<div class="t" style="left:169px;top:2px;font-weight:bold;color:#14146e">4.42</div>
<div class="t" style="left:4px;top:20.4px;color:#14146e">RSSI: -90 dB</div>
<div class="t" style="left:109px;top:20.2px;font-size:12.4px;color:#14146e">2021-10-27 15:01:15</div>
</div>
<div class="rr" style="top:432px;">
<div class="t" style="left:4px;top:2px;font-weight:bold;color:#2a7a10">20474</div>
<div class="t" style="left:109px;top:2px;font-weight:bold;color:#14146e">20474</div>
<div class="t" style="left:169px;top:2px;font-weight:bold;color:#14146e">4.43</div>
<div class="t" style="left:4px;top:20.4px;color:#14146e">RSSI: -102 dB</div>
<div class="t" style="left:109px;top:20.2px;font-size:12.4px;color:#14146e">2021-10-27 13:57:36</div>
</div>
<div class="rr" style="top:468px;">
<div class="t" style="left:4px;top:2px;font-weight:bold;color:#2a7a10">4013</div>
<div class="t" style="left:109px;top:2px;font-weight:bold;color:#14146e">4013</div>
<div class="t" style="left:169px;top:2px;font-weight:bold;color:#14146e">4.41</div>
<div class="t" style="left:4px;top:20.4px;color:#14146e">RSSI: -102 dB</div>
<div class="t" style="left:109px;top:20.2px;font-size:12.4px;color:#14146e">2021-10-27 04:33:47</div>
</div>
<div class="rr" style="top:504px;">
<div class="t" style="left:4px;top:2px;font-weight:bold;color:#2a7a10">20485</div>
<div class="t" style="left:109px;top:2px;font-weight:bold;color:#14146e">20485</div>
<div class="t" style="left:169px;top:2px;font-weight:bold;color:#14146e">4.42</div>
<div class="t" style="left:4px;top:20.4px;color:#14146e">RSSI: -70 dB</div>
<div class="t" style="left:109px;top:20.2px;font-size:12.4px;color:#14146e">2021-10-27 14:56:57</div>
</div>
<div class="rr" style="top:540px;background:#c6c6c2;">
<div class="t" style="left:4px;top:2px;font-weight:bold;color:#3c3c8c">11013</div>
<div class="t" style="left:109px;top:2px;font-weight:bold;color:#000">11013</div>
<div class="t" style="left:169px;top:2px;font-weight:bold;color:#000">7.72</div>
<div class="t" style="left:109px;top:20.2px;font-size:12.4px;color:#000">2021-10-25 22:52:36</div>
</div>
<div class="rr" style="top:576px;">
<div class="t" style="left:4px;top:2px;font-weight:bold;color:#2a7a10">4559</div>
<div class="t" style="left:109px;top:2px;font-weight:bold;color:#14146e">4559</div>
<div class="t" style="left:169px;top:2px;font-weight:bold;color:#14146e">3.31</div>
<div class="t" style="left:4px;top:20.4px;color:#14146e">RSSI: -103 dB</div>
<div class="t" style="left:109px;top:20.2px;font-size:12.4px;color:#14146e">2021-10-27 15:01:10</div>
</div>
<div class="rr" style="top:612px;">
<div class="t" style="left:4px;top:2px;font-weight:bold;color:#2a7a10">4586</div>
<div class="t" style="left:109px;top:2px;font-weight:bold;color:#14146e">4586</div>
<div class="t" style="left:169px;top:2px;font-weight:bold;color:#14146e">7.73</div>
<div class="t" style="left:4px;top:20.4px;color:#14146e">RSSI: -68 dB</div>
<div class="t" style="left:109px;top:20.2px;font-size:12.4px;color:#14146e">2021-10-27 05:58:17</div>
</div>
<div class="rr" style="top:648px;">
<div class="t" style="left:4px;top:2px;font-weight:bold;color:#2a7a10">8882</div>
<div class="t" style="left:109px;top:2px;font-weight:bold;color:#14146e">8882</div>
<div class="t" style="left:169px;top:2px;font-weight:bold;color:#14146e">7.72</div>
<div class="t" style="left:4px;top:20.4px;color:#14146e">RSSI: -68 dB</div>
<div class="t" style="left:109px;top:20.2px;font-size:12.4px;color:#14146e">2021-10-27 14:56:38</div>
</div>
<div class="rr" style="top:684px;">
<div class="t" style="left:4px;top:2px;font-weight:bold;color:#2a7a10">20476</div>
<div class="t" style="left:109px;top:2px;font-weight:bold;color:#14146e">20476</div>
<div class="t" style="left:169px;top:2px;font-weight:bold;color:#14146e">4.41</div>
<div class="t" style="left:4px;top:20.4px;color:#14146e">RSSI: -106 dB</div>
<div class="t" style="left:109px;top:20.2px;font-size:12.4px;color:#14146e">2021-10-27 15:00:55</div>
</div>
<div class="rr" style="top:720px;">
<div class="t" style="left:4px;top:2px;font-weight:bold;color:#2a7a10">6506</div>
<div class="t" style="left:109px;top:2px;font-weight:bold;color:#14146e">6506</div>
<div class="t" style="left:169px;top:2px;font-weight:bold;color:#14146e">7.73</div>
<div class="t" style="left:4px;top:20.4px;color:#14146e">RSSI: -98 dB</div>
<div class="t" style="left:109px;top:20.2px;font-size:12.4px;color:#14146e">2021-10-26 21:11:11</div>
</div>
<div class="rr" style="top:756px;">
<div class="t" style="left:4px;top:2px;font-weight:bold;color:#2a7a10">17741</div>
<div class="t" style="left:109px;top:2px;font-weight:bold;color:#14146e">17741</div>
<div class="t" style="left:169px;top:2px;font-weight:bold;color:#14146e">3.31</div>
<div class="t" style="left:4px;top:20.4px;color:#14146e">RSSI: -61 dB</div>
<div class="t" style="left:109px;top:20.2px;font-size:12.4px;color:#14146e">2021-10-27 15:01:03</div>
</div>
<div class="rr" style="top:792px;">
<div class="t" style="left:4px;top:2px;font-weight:bold;color:#2a7a10">20489</div>
<div class="t" style="left:109px;top:2px;font-weight:bold;color:#14146e">20489</div>
<div class="t" style="left:169px;top:2px;font-weight:bold;color:#14146e">4.42</div>
<div class="t" style="left:4px;top:20.4px;color:#14146e">RSSI: -76 dB</div>
<div class="t" style="left:109px;top:20.2px;font-size:12.4px;color:#14146e">2021-10-27 15:01:15</div>
</div>
<div class="rr" style="top:828px;">
<div class="t" style="left:4px;top:2px;font-weight:bold;color:#2a7a10">4026</div>
<div class="t" style="left:109px;top:2px;font-weight:bold;color:#14146e">4026</div>
<div class="t" style="left:169px;top:2px;font-weight:bold;color:#14146e">4.42</div>
<div class="t" style="left:4px;top:20.4px;color:#14146e">RSSI: -80 dB</div>
<div class="t" style="left:109px;top:20.2px;font-size:12.4px;color:#14146e">2021-10-27 15:01:20</div>
</div>
</div>
<div class="ab" style="left:1262px;top:114px;width:15px;height:845px;background:#f0f0f0"></div>
<div class="ab" style="left:1262px;top:131px;width:15px;height:33px;background:#cdcdcd"></div>
<svg class="ab" style="left:1265px;top:119px" width="9" height="6" viewBox="0 0 9 6"><path d="M1 5L4.5 1.5 8 5" fill="none" stroke="#606060" stroke-width="1.6"/></svg>
<svg class="ab" style="left:1265px;top:947px" width="9" height="6" viewBox="0 0 9 6"><path d="M1 1L4.5 4.5 8 1" fill="none" stroke="#606060" stroke-width="1.6"/></svg>
<div class="ab" style="left:529px;top:112px;width:751px;height:1px;background:#b4bcc0"></div>
<div class="ab" style="left:727px;top:724px;width:221px;height:196px;background:#f0f0f0;border:1px solid #cfcfcf;box-shadow:2px 2px 2px rgba(0,0,0,.25)"></div>
<div class="mi" style="left:762px;top:731.5px;color:#000;letter-spacing:-0.6px;">Get RSSI</div>
<div class="mi" style="left:762px;top:753.5px;color:#000;letter-spacing:-0.6px;">Get VSWR</div>
<div class="mi" style="left:762px;top:775.5px;color:#000;letter-spacing:-0.27px;">Get TX power</div>
<div class="mi" style="left:762px;top:797.5px;color:#000;letter-spacing:0px;">Get modem temperature</div>
<div class="mi" style="left:762px;top:819.5px;color:#000;letter-spacing:-0.07px;">Get PA temperature</div>
<div class="ab" style="left:758px;top:840px;width:187px;height:1px;background:#d4d4d4"></div>
<div class="mi" style="left:762px;top:848.5px;color:#000;letter-spacing:-0.18px;">Clear all alarms</div>
<div class="ab" style="left:758px;top:869px;width:187px;height:1px;background:#d4d4d4"></div>
<div class="mi" style="left:762px;top:877.5px;color:#000;letter-spacing:-0.21px;">Disable repeater</div>
<div class="mi" style="left:762px;top:899.5px;color:#000;letter-spacing:-0.42px;">Reset repeater</div>
<div class="ab" style="left:1050px;top:369px;width:197px;height:171px;background:#f0f0f0;border:1px solid #cfcfcf;box-shadow:2px 2px 2px rgba(0,0,0,.25)"></div>
<div class="mi" style="left:1084px;top:375px;color:#6d6d6d;letter-spacing:-0.1px;font-size:11.4px">xpr7550e 2010 (2010)</div>
<div class="ab" style="left:1081px;top:395px;width:165px;height:1px;background:#d4d4d4"></div>
<div class="mi" style="left:1084px;top:404px;color:#000;letter-spacing:0px;">Rename</div>
<div class="mi" style="left:1084px;top:426px;color:#000;letter-spacing:-0.2px;">Delete</div>
<div class="ab" style="left:1081px;top:446px;width:165px;height:1px;background:#d4d4d4"></div>
<div class="mi" style="left:1084px;top:455px;color:#000;letter-spacing:-0.2px;">Radio Check</div>
<div class="mi" style="left:1084px;top:477px;color:#000;letter-spacing:0px;">Radio Alert</div>
<div class="mi" style="left:1084px;top:499px;color:#000;letter-spacing:-0.27px;">Radio Enable</div>
<div class="mi" style="left:1084px;top:521px;color:#000;letter-spacing:-0.25px;">Radio Disable</div>
<svg class="ab" style="left:1255px;top:880px" width="25" height="54" viewBox="0 0 25 54"><path d="M0 5L4 1H25V53L3 40L0 37Z" fill="#5c626c" stroke="#3a3e44" stroke-width="0.8"/><rect x="4" y="7" width="21" height="20" fill="#0d3a70"/><circle cx="14.5" cy="17" r="8.3" fill="#5c6474"/><path d="M8.5 17h12M11.5 13.8L8 17l3.5 3.2M17.5 13.8L21 17l-3.5 3.2" stroke="#0d3a70" stroke-width="2" fill="none"/></svg>
<div class="ab" style="left:0;top:960px;width:1280px;height:24px;background:#efefef"></div>
<div class="t" style="left:10px;top:969px;font-size:11.3px;color:#1a1aa0">... ready ...</div>
<div class="ab" style="left:963px;top:964px;width:95px;height:20px;border-top:1px solid #a0a0a0;border-left:1px solid #a0a0a0;border-right:1px solid #fff;background:#efefef"></div>
<div class="t" style="left:983px;top:968px;font-size:12.5px;color:#8a8a8a">CONTROL</div>
<div class="ab" style="left:1063px;top:964px;width:96px;height:20px;border-top:1px solid #a0a0a0;border-left:1px solid #a0a0a0;border-right:1px solid #fff;background:#efefef"></div>
<div class="t" style="left:1066px;top:968px;font-size:12.5px;color:#1a1aa0"># peers: 25</div>
<div class="ab" style="left:1163px;top:964px;width:96px;height:20px;border-top:1px solid #a0a0a0;border-left:1px solid #a0a0a0;border-right:1px solid #fff;background:#efefef"></div>
<div class="t" style="left:1166px;top:968px;font-size:12.5px;color:#1a1aa0"># SUs: 229/562</div>
<div class="ab" style="left:0;top:984px;width:1280px;height:40px;background:#1b1b1b"></div>
<svg class="ab" style="left:16px;top:996px" width="16" height="16" viewBox="0 0 16 16"><g fill="#fff"><rect x="0" y="0" width="7.3" height="7.3"/><rect x="8.3" y="0" width="7.7" height="7.3"/><rect x="0" y="8.3" width="7.3" height="7.7"/><rect x="8.3" y="8.3" width="7.7" height="7.7"/></g></svg>
<svg class="ab" style="left:63px;top:995px" width="18" height="18" viewBox="0 0 18 18"><circle cx="11" cy="7" r="5.3" fill="none" stroke="#fff" stroke-width="1.4"/><path d="M7.2 10.8L1.5 16.5" stroke="#fff" stroke-width="1.6"/></svg>
<svg class="ab" style="left:111px;top:995px" width="18" height="18" viewBox="0 0 18 18"><circle cx="9" cy="9" r="7" fill="none" stroke="#fff" stroke-width="1.8"/></svg>
<svg class="ab" style="left:159px;top:995px" width="18" height="18" viewBox="0 0 18 18"><g fill="none" stroke="#fff" stroke-width="1.2"><path d="M1 2h11M1 16h11"/><rect x="1.5" y="5.5" width="10" height="7"/><path d="M15 1v4M15 7v4M15 13v4"/></g></svg>
<svg class="ab" style="left:207px;top:995px" width="22" height="19" viewBox="0 0 22 19"><path d="M0 2h8l2 2h12v15H0z" fill="#e8b830"/><rect x="0" y="6" width="22" height="13" fill="#f8d060"/><path d="M6 12h10v7h-3v-4h-4v4H6z" fill="#3a8ee0"/></svg>
<div class="ab" style="left:199px;top:1022px;width:40px;height:2px;background:#76b9ed"></div>
<svg class="ab" style="left:255px;top:991px" width="26" height="26" viewBox="0 0 26 26"><defs><linearGradient id="eg" x1="0" y1="1" x2="1" y2="0"><stop offset="0" stop-color="#1a5fc0"/><stop offset="0.55" stop-color="#2a9ae0"/><stop offset="1" stop-color="#50d070"/></linearGradient></defs><circle cx="13" cy="13" r="12.5" fill="url(#eg)"/><path d="M8 15c0-4 3-6.5 6.5-6.5 3.5 0 6 2 6 5 0 2-1.5 3-3 3h-5c0 2.5 2.5 4.5 6.5 4.5 1.5 0 3-.4 4-1-2 3.2-5.5 5.5-10 5.5-6 0-9-5-5-10.5z" fill="#1b4fa8"/><ellipse cx="15.5" cy="13.5" rx="3.5" ry="2.6" fill="#1b1b1b"/></svg>
<svg class="ab" style="left:305px;top:994px" width="24" height="22" viewBox="0 0 24 22"><rect x="1" y="1" width="20" height="15" fill="#c8ccd0" stroke="#9098a0"/><rect x="3" y="3" width="16" height="11" fill="#e8eef4"/><path d="M4 11l3-4 3 3 3-6 3 5" stroke="#3070c0" fill="none"/><rect x="7" y="16" width="8" height="3" fill="#a0a4a8"/><rect x="4" y="19" width="14" height="2" fill="#b0b4b8"/></svg>
<svg class="ab" style="left:355px;top:993px" width="22" height="24" viewBox="0 0 22 24"><rect x="1" y="3" width="17" height="20" fill="#e8e8d8" stroke="#808070"/><rect x="3" y="14" width="13" height="7" fill="#60b040"/><path d="M8 16l12-14" stroke="#e0b020" stroke-width="3"/></svg>
<svg class="ab" style="left:402px;top:991px" width="26" height="24" viewBox="0 0 26 24"><g fill="#c8d8ea"><polygon points="19.50,10.00 19.32,11.85 16.47,12.68 15.82,13.89 16.72,16.72 15.28,17.90 12.68,16.47 11.37,16.87 10.00,19.50 8.15,19.32 7.32,16.47 6.11,15.82 3.28,16.72 2.10,15.28 3.53,12.68 3.13,11.37 0.50,10.00 0.68,8.15 3.53,7.32 4.18,6.11 3.28,3.28 4.72,2.10 7.32,3.53 8.63,3.13 10.00,0.50 11.85,0.68 12.68,3.53 13.89,4.18 16.72,3.28 17.90,4.72 16.47,7.32 16.87,8.63"/><circle cx="10" cy="10" r="3.8" fill="#1b1b1b"/></g><g fill="#b0c4d8"><polygon points="25.50,18.50 25.36,19.72 23.60,20.24 23.13,20.99 23.43,22.80 22.39,23.46 20.89,22.40 20.00,22.50 18.78,23.86 17.61,23.46 17.51,21.63 16.87,20.99 15.04,20.89 14.64,19.72 16.00,18.50 16.10,17.61 15.04,16.11 15.70,15.07 17.51,15.37 18.26,14.90 18.78,13.14 20.00,13.00 20.89,14.60 21.74,14.90 23.43,14.20 24.30,15.07 23.60,16.76 23.90,17.61"/><circle cx="20" cy="18.5" r="2" fill="#1b1b1b"/></g></svg>
<div class="ab" style="left:395px;top:1022px;width:40px;height:2px;background:#76b9ed"></div>
<svg class="ab" style="left:454px;top:991px" width="22" height="23" viewBox="0 0 22 23"><g fill="#2a90e0" stroke="#1060b0" stroke-width="0.5"><rect x="2" y="8" width="5" height="5"/><rect x="7" y="8" width="5" height="5"/><rect x="12" y="9" width="4" height="4"/><rect x="2" y="13" width="5" height="5"/><rect x="7" y="13" width="5" height="5"/><rect x="12" y="13" width="4" height="5"/><rect x="3" y="18" width="4" height="4"/><rect x="7" y="18" width="5" height="4"/><rect x="12" y="18" width="4" height="4"/></g><g fill="#40a8f0"><rect x="8" y="2" width="5" height="5"/><rect x="15" y="5" width="5" height="5"/></g></svg>
<svg class="ab" style="left:501px;top:991px" width="25" height="23" viewBox="0 0 25 23"><path d="M4 22C5 12 8 3 13 3" fill="none" stroke="#9040d0" stroke-width="4"/><path d="M13 3c4 0 7 6 9 15" fill="none" stroke="#2a70d8" stroke-width="3"/></svg>
<svg class="ab" style="left:552px;top:999px" width="20" height="13" viewBox="0 0 20 13"><rect x="0.5" y="1.5" width="19" height="10" fill="#1a4a90" stroke="#70b0f0" stroke-width="1"/><rect x="2" y="4" width="16" height="5" fill="#3a80d0"/><g fill="#c0e0ff"><rect x="3" y="5.5" width="2" height="2"/><rect x="6" y="5.5" width="2" height="2"/><rect x="9" y="5.5" width="2" height="2"/><rect x="12" y="5.5" width="2" height="2"/></g><rect x="0.5" y="0.5" width="19" height="1.2" fill="#e0f0ff"/></svg>
<div class="ab" style="left:587px;top:984px;width:48px;height:40px;background:#3d3d3d"></div>
<svg class="ab" style="left:598px;top:992px" width="24" height="26" viewBox="0 0 24 26"><rect x="5" y="4" width="10" height="4" fill="#e06030"/><polygon points="15,4 23,2 23,8 15,7" fill="#f0d060"/><polygon points="6,8 14,8 16,23 4,23" fill="#f0e8e0"/><rect x="3" y="22" width="14" height="3" fill="#d06030"/><rect x="8.5" y="16" width="3" height="6" fill="#906050"/></svg>
<div class="ab" style="left:587px;top:1022px;width:48px;height:2px;background:#76b9ed"></div>
<svg class="ab" style="left:647px;top:991px" width="24" height="25" viewBox="0 0 24 25"><rect x="2.5" y="1.5" width="14" height="18" fill="#e8e8e8" stroke="#808080"/><rect x="6.5" y="4.5" width="15" height="19" fill="#f8f8f8" stroke="#808080"/><g fill="#a0a0a0"><rect x="9" y="7" width="10" height="1"/><rect x="9" y="9" width="10" height="1"/></g><rect x="15" y="11" width="5" height="3" fill="#e04040"/><circle cx="11" cy="15" r="4.5" fill="#a8d0f0" stroke="#3a6aa0" stroke-width="1.5"/><path d="M7.5 18.5l-5 5" stroke="#3a5a80" stroke-width="2"/></svg>
<div class="ab" style="left:640px;top:1022px;width:40px;height:2px;background:#76b9ed"></div>
<svg class="ab" style="left:695px;top:995px" width="28" height="19" viewBox="0 0 28 19"><ellipse cx="14" cy="9.5" rx="13" ry="9" fill="#d01010"/><text x="14" y="13" font-family="Liberation Sans" font-weight="bold" font-size="10" fill="#ffe040" text-anchor="middle">t@t</text></svg>
<div class="ab" style="left:689px;top:1022px;width:40px;height:2px;background:#76b9ed"></div>
<svg class="ab" style="left:1096px;top:998px" width="14" height="8" viewBox="0 0 14 8"><path d="M1 7L7 1l6 6" fill="none" stroke="#fff" stroke-width="1.2"/></svg>
<svg class="ab" style="left:1118px;top:996px" width="18" height="16" viewBox="0 0 18 16"><g fill="none" stroke="#fff" stroke-width="1.1"><rect x="3.5" y="1.5" width="13" height="9"/><path d="M10 10.5v3M6 14.5h8M1.5 4.5h4v4h-4zM3.5 8.5v6"/></g></svg>
<svg class="ab" style="left:1142px;top:996px" width="18" height="16" viewBox="0 0 18 16"><g fill="none" stroke="#fff" stroke-width="1.1"><path d="M1.5 5.5h3l4-4v13l-4-4h-3z"/><path d="M11 5c1 1 1 5 0 6M13.5 3c2 2 2 8 0 10M16 1.5c2.5 3 2.5 10 0 13"/></g></svg>
<div class="t" style="left:1174px;top:989.5px;font-size:11.6px;color:#fff">3:01 PM</div>
<div class="t" style="left:1167px;top:1007.5px;font-size:11.6px;color:#fff">10/27/2021</div>
<svg class="ab" style="left:1236px;top:992px" width="30" height="30" viewBox="0 0 30 30"><path d="M3 4h16.3v13H11.5l-1.8 2.5L7 17H3z" fill="#fff"/><g stroke="#1b1b1b" stroke-width="1"><path d="M6 7.5h10M6 10.5h10M6 13.5h6"/></g><circle cx="18.8" cy="19.4" r="7.6" fill="#262626" stroke="#a8a4b0" stroke-width="1.5"/><path d="M17 16.5l2.3-1.8V23.5" fill="none" stroke="#fff" stroke-width="1.6"/></svg>
<div class="ab" style="left:1275px;top:984px;width:1px;height:40px;background:#5a5a5a"></div>
</body></html>
